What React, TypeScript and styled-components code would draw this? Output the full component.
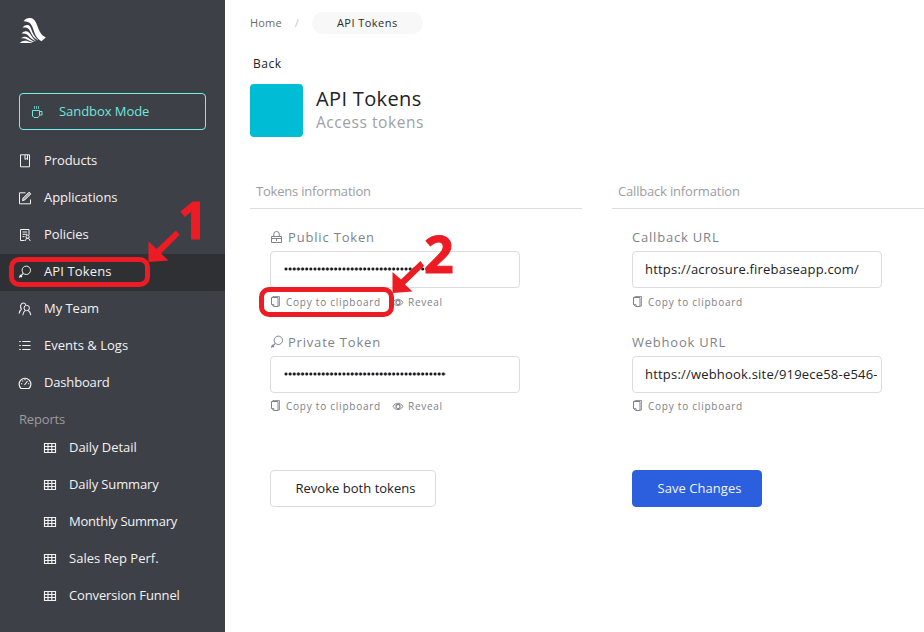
import React from "react";
import styled, { createGlobalStyle, css } from "styled-components";

const GlobalStyle = createGlobalStyle`
  * { box-sizing: border-box; }
  body { margin: 0; background: #fff; font-family: "Open Sans", "Noto Sans", sans-serif; overflow: hidden; }
`;

const Page = styled.div`
  position: relative;
  display: flex;
  width: 924px;
  height: 632px;
  overflow: hidden;
  color: #212226;
  font-size: 13px;
`;

/* Sidebar */

const Spaced = styled.span<{ $ls: number }>`
  letter-spacing: ${(p) => p.$ls}px;
  white-space: nowrap;
`;

const Sidebar = styled.nav`
  flex: none;
  width: 225px;
  background: #3e4047;
  color: #f2f2f3;
`;

const LogoBox = styled.div`
  height: 93px;
  padding: 17px 0 0 19px;
`;

const SandboxButton = styled.div`
  display: flex;
  align-items: center;
  gap: 15px;
  width: 187px;
  height: 37px;
  margin: 0 0 13px 19px;
  padding-left: 10px;
  border: 1px solid #70f2ea;
  border-radius: 4px;
  color: #70e6df;

  ${Spaced} { padding-bottom: 1px; }
`;

const NavItem = styled.div<{ $active?: boolean; $sub?: boolean }>`
  display: flex;
  align-items: center;
  gap: 12px;
  height: 37px;
  padding: 0 0 1px ${(p) => (p.$sub ? 43 : 18)}px;
  ${(p) => p.$active && css`background: #2f3033;`}

  ${Spaced} { padding-bottom: 2px; }
`;

const NavHeading = styled.div`
  height: 28px;
  padding: 7px 0 0 19px;
  line-height: 20px;
  color: #9a9ba0;
`;

/* Main area */

const Main = styled.main`
  flex: 1;
  min-width: 0;
  padding: 11px 0 0 25px;
`;

const Breadcrumb = styled.div`
  display: flex;
  align-items: center;
  height: 23px;
  font-size: 11px;
  color: #6a6b70;

  ${Spaced} { padding-bottom: 1px; }
`;

const Slash = styled.span`
  margin: 0 13px 0 13px;
  padding-bottom: 1px;
  color: #c8c8cc;
`;

const Pill = styled.span`
  display: flex;
  align-items: center;
  justify-content: center;
  width: 111px;
  height: 22px;
  border-radius: 11px;
  background: #f8f8f9;
  color: #2b2c30;
`;

const BackLink = styled.div`
  height: 20px;
  margin: 20px 0 10px 3px;
  line-height: 20px;
  font-size: 12px;
`;

const TitleRow = styled.header`
  display: flex;
  gap: 13px;
`;

const Swatch = styled.div`
  width: 53px;
  height: 53px;
  border-radius: 4px;
  background: #00bcd4;
`;

const Title = styled.h1`
  margin: 2px 0 0;
  font-size: 20px;
  font-weight: 400;
  line-height: 26px;
`;

const Subtitle = styled.div`
  font-size: 15.5px;
  line-height: 21px;
  color: #a0a1a7;
`;

const Columns = styled.div`
  display: grid;
  grid-template-columns: 332px 332px;
  gap: 30px;
  margin-top: 39px;
`;

const SectionTitle = styled.h2`
  height: 33px;
  margin: 0;
  padding-left: 6px;
  border-bottom: 1px solid #dededf;
  font-size: 13px;
  font-weight: 400;
  line-height: 31px;
  color: #9c9da3;
`;

const Fields = styled.div`
  padding: 18px 0 0 20px;
`;

const Field = styled.div`
  height: 105px;
`;

const FieldLabel = styled.label`
  display: flex;
  align-items: center;
  gap: 4px;
  height: 20px;
  margin-bottom: 4px;
  font-weight: 500;
  color: #80838b;

  ${Spaced} { padding-bottom: 1px; }
`;

const InputBox = styled.div`
  display: flex;
  align-items: center;
  width: 250px;
  height: 37px;
  padding: 0 4px 2px 12px;
  border: 1px solid #dcdcde;
  border-radius: 4px;
`;

const InputText = styled(Spaced)`
  overflow: hidden;
`;

const Dots = styled.div`
  width: 162px;
  height: 4px;
  margin: 1px 0 0 1px;
  background: radial-gradient(circle at 2px 2px, #1c1d22 1.2px, transparent 1.9px) 0 0 / 4.15px 4px repeat-x;
`;

const Actions = styled.div<{ $raised?: boolean }>`
  display: flex;
  align-items: center;
  height: 16px;
  margin-top: ${(p) => (p.$raised ? 5 : 6)}px;
  font-size: 10px;
  color: #7d8088;

  ${Spaced} { padding-bottom: 1px; }
`;

const Action = styled.span`
  display: flex;
  align-items: center;
  width: 122px;
  gap: 4px;
`;

const Button = styled.button<{ $primary?: boolean }>`
  display: block;
  width: ${(p) => (p.$primary ? 130 : 166)}px;
  height: 37px;
  margin-top: 33px;
  padding: 0 0 1px 5px;
  border: 1px solid ${(p) => (p.$primary ? "#2b5fde" : "#dcdcde")};
  border-radius: 4px;
  background: ${(p) => (p.$primary ? "#2b5fde" : "#fff")};
  color: ${(p) => (p.$primary ? "#f2f5ff" : "#212226")};
  font: 400 13px "Open Sans", "Noto Sans", sans-serif;
`;

/* Annotations drawn over the page */

const Overlay = styled.svg`
  position: absolute;
  inset: 0;
  pointer-events: none;
`;

const Highlight = styled.div<{ $x: number; $y: number; $w: number; $h: number }>`
  position: absolute;
  left: ${(p) => p.$x}px;
  top: ${(p) => p.$y}px;
  width: ${(p) => p.$w}px;
  height: ${(p) => p.$h}px;
  border: 5px solid #ed1c24;
  border-radius: 10px;
`;

const Step = styled.div<{ $x: number; $y: number }>`
  position: absolute;
  left: ${(p) => p.$x}px;
  top: ${(p) => p.$y}px;
  font-size: 52px;
  font-weight: 700;
  line-height: 52px;
  color: #ed1c24;
  -webkit-text-stroke: 1px #ed1c24;
`;

/* Icons */

const Svg = styled.svg`
  flex: none;
  fill: none;
  stroke: currentColor;
`;

const paths = {
  cup: <><path d="M2.500 5.500h7v5L8 12.500H4L2.500 11zM9.500 6.500H12v3.500H9.500" /><path d="M4.500 1v3M6.500 1v3M8.500 1v3" strokeOpacity=".75" /></>,
  book: <><path d="M2.500 .8h9v12h-9z" /><path d="M7 1v4.500l1.200-1 1.300 1V1" /></>,
  edit: <><path d="M7.500 1.800H1.500v11h11V8.500" /><path d="M4.500 9.700l.5-2.500 6-6 1.800 1.700-6 6z" fill="currentColor" fillOpacity=".55" /></>,
  policy: <><path d="M6.500 12.500h-4v-11h8.500v5.500M4.500 4h4.700M4.500 6.300h4.700M4.500 8.600h2" /><circle cx="9.600" cy="8.800" r="1.600" /><path d="M7 13l1.600-2.700h2L12.300 13" /></>,
  key: <><circle cx="8.300" cy="5.300" r="4.200" /><path d="M5.300 8.300L1.200 12.500M1.800 10l2.200 2" strokeWidth="1.200" /></>,
  team: <><circle cx="8.700" cy="6" r="2.700" /><path d="M4.800 13.200c.2-2.500 1.200-3.700 2.200-4.600M10.200 8.500c1.200.8 2.200 2.200 2.600 4.700M3.500 7C1.800 5.300 2.500 1 5.200 1c1.400 0 2.200.7 2.600 1.800M3.600 7C2.300 8 1.500 9.500 1.200 11.500" strokeWidth="1.100" /></>,
  list: <><path d="M1.200 2.500h1.600M1.200 6.500h1.600M1.200 10.500h1.600" /><path d="M4.200 2.500h8.300M4.200 6.500h8.300M4.200 10.500h8.300" /></>,
  gauge: <><path d="M3 12.500a5.900 5.900 0 1 1 8 0z" strokeWidth="1.200" /><path d="M6.500 9l3-4M3 7.800h1.200M10 7.800h1.200M4.200 4.600l.9.800M7 3v1.200" strokeWidth="1.100" /></>,
  table: <path d="M1.500 2.500h11v9h-11zM1.500 5.500h11M1.500 8.500h11M5 2.500v9M8.800 2.500v9" strokeWidth="1.150" />,
  lock: <><path d="M1.500 6.500h10v6H1.500zM3.800 6.500V4.200a2.700 2.700 0 0 1 5.500 0v2.300" /><path d="M1.500 8.500h10M6.500 9v2" /></>,
  copy: <><path d="M1.500 2.500h6.500v9H4L1.500 9.500z" /><path d="M2.500 1.500h7v9.500h-1.500M1.500 9.500H4v2" strokeOpacity=".8" /></>,
  eye: <><path d="M1.300 7.500c2.500-5 8.700-5 11.400 0-2.700 5-8.900 5-11.400 0z" strokeWidth="1.100" /><circle cx="7" cy="7.500" r="2.400" strokeWidth="1.300" /></>,
};

type IconName = keyof typeof paths;

const Icon = ({ name }: { name: IconName }) => (
  <Svg width="14" height="14" viewBox="0 0 14 14">{paths[name]}</Svg>
);

const Logo = () => (
  <svg width="28" height="28" viewBox="0 0 28 28" fill="#fff">
    <path d="M4.500 4.200C6.500 1.500 9 .8 11.500 1.100c4 .6 5.500 4 7 8.200 1.500 4.300 3.700 9.200 8.300 11.200-1.300 1-2.600 2.400-4.300 3.800-5.500-3-6.800-7.800-8.300-12.300C12.800 7.600 10.500 3.900 4.500 4.200z" />
    <path d="M3.500 10.500C5.700 8 9 7 11 9.600c1.500 2 2.500 9 8.500 14-6.500-3-7.500-8.500-9.500-11.300-1.300-1.800-3.800-1.900-6.500-1.800z" />
    <path d="M2.600 16.500c2-2.300 5-3 7.200-1.100 2.400 2 3.500 5.900 7.700 9-4-1.400-6.500-3.400-8.300-5.800-1.500-1.900-3.800-2.200-6.600-2.100z" />
    <path d="M2 21.300c2.100-1.700 4.600-2.200 7-.6 1.900 1.200 3.500 2.700 6.500 4.300-3.700-.3-5.700-1.500-7.500-2.600-1.700-1-3.700-1.200-6-1.100z" />
    <path d="M.8 26c2-1.900 5-2.700 8-1.700 1.700.5 3.400 1 4.900 1.500-4.500.7-8.200-.2-12.900.2z" />
  </svg>
);

/* Content */

const navItems: { icon: IconName; text: string; ls: number; active?: boolean }[] = [
  { icon: "book", text: "Products", ls: -0.1 },
  { icon: "edit", text: "Applications", ls: -0.05 },
  { icon: "policy", text: "Policies", ls: -0.08 },
  { icon: "key", text: "API Tokens", ls: 0.13, active: true },
  { icon: "team", text: "My Team", ls: -0.03 },
  { icon: "list", text: "Events & Logs", ls: 0.02 },
  { icon: "gauge", text: "Dashboard", ls: -0.17 },
];

const reports: [string, number][] = [
  ["Daily Detail", -0.05],
  ["Daily Summary", -0.13],
  ["Monthly Summary", -0.23],
  ["Sales Rep Perf.", 0.02],
  ["Conversion Funnel", -0.13],
];

const CopyAction = () => (
  <Action>
    <Svg width="12" height="14" viewBox="0 0 12 14">{paths.copy}</Svg>
    <Spaced $ls={0.76}>Copy to clipboard</Spaced>
  </Action>
);

const RevealAction = () => (
  <Action>
    <Svg width="12" height="12" viewBox="0 0 14 14">{paths.eye}</Svg>
    <Spaced $ls={0.72}>Reveal</Spaced>
  </Action>
);

export default function App() {
  return (
    <Page>
      <GlobalStyle />
      <Sidebar>
        <LogoBox><Logo /></LogoBox>
        <SandboxButton><Icon name="cup" /><Spaced $ls={-0.06}>Sandbox Mode</Spaced></SandboxButton>
        {navItems.map((n) => (
          <NavItem key={n.text} $active={n.active}>
            <Icon name={n.icon} /><Spaced $ls={n.ls}>{n.text}</Spaced>
          </NavItem>
        ))}
        <NavHeading><Spaced $ls={-0.18}>Reports</Spaced></NavHeading>
        {reports.map(([text, ls]) => (
          <NavItem key={text} $sub><Icon name="table" /><Spaced $ls={ls}>{text}</Spaced></NavItem>
        ))}
      </Sidebar>

      <Main>
        <Breadcrumb>
          <Spaced $ls={0.16}>Home</Spaced>
          <Slash>/</Slash>
          <Pill><Spaced $ls={0.46}>API Tokens</Spaced></Pill>
        </Breadcrumb>
        <BackLink><Spaced $ls={0.5}>Back</Spaced></BackLink>
        <TitleRow>
          <Swatch />
          <div>
            <Title><Spaced $ls={0.35}>API Tokens</Spaced></Title>
            <Subtitle><Spaced $ls={0.55}>Access tokens</Spaced></Subtitle>
          </div>
        </TitleRow>

        <Columns>
          <section>
            <SectionTitle><Spaced $ls={-0.2}>Tokens information</Spaced></SectionTitle>
            <Fields>
              <Field>
                <FieldLabel><Icon name="lock" /><Spaced $ls={0.82}>Public Token</Spaced></FieldLabel>
                <InputBox><Dots /></InputBox>
                <Actions><CopyAction /><RevealAction /></Actions>
              </Field>
              <Field>
                <FieldLabel><Icon name="key" /><Spaced $ls={0.8}>Private Token</Spaced></FieldLabel>
                <InputBox><Dots /></InputBox>
                <Actions $raised><CopyAction /><RevealAction /></Actions>
              </Field>
              <Button><Spaced $ls={0.02}>Revoke both tokens</Spaced></Button>
            </Fields>
          </section>
          <section>
            <SectionTitle><Spaced $ls={-0.18}>Callback information</Spaced></SectionTitle>
            <Fields>
              <Field>
                <FieldLabel><Spaced $ls={0.8}>Callback URL</Spaced></FieldLabel>
                <InputBox><InputText $ls={0.2}>https://acrosure.firebaseapp.com/</InputText></InputBox>
                <Actions><CopyAction /></Actions>
              </Field>
              <Field>
                <FieldLabel><Spaced $ls={0.78}>Webhook URL</Spaced></FieldLabel>
                <InputBox><InputText $ls={0.2}>https://webhook.site/919ece58-e546-</InputText></InputBox>
                <Actions $raised><CopyAction /></Actions>
              </Field>
              <Button $primary><Spaced $ls={0.05}>Save Changes</Spaced></Button>
            </Fields>
          </section>
        </Columns>
      </Main>

      <Highlight $x={9} $y={257} $w={141} $h={30} />
      <Highlight $x={259} $y={287} $w={135} $h={30} />
      <Overlay width="924" height="632" viewBox="0 0 924 632" fill="#ed1c24">
        <path d="M148.500 241.500L148.500 262L168.500 260.500L161 253.500L179.500 235L176 230.500L156.500 249z" />
        <path d="M392.500 272L392.500 293L412.500 291.500L405 284.500L424 266L420.500 261L401 279.500z" />
      </Overlay>
      <Step $x={178} $y={193}>1</Step>
      <Step $x={424} $y={227}>2</Step>
    </Page>
  );
}
